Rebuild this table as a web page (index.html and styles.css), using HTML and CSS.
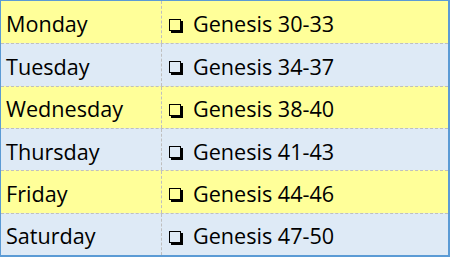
FILE: index.html
```html
<!DOCTYPE html>
<html>
<head>
<meta charset="utf-8">
<link rel="stylesheet" href="styles.css">
</head>
<body>
<div class="schedule">
  <div class="row yellow"><div class="day">Monday</div><div class="reading"><span class="box"></span>Genesis 30-33</div></div>
  <div class="row blue"><div class="day">Tuesday</div><div class="reading"><span class="box"></span>Genesis 34-37</div></div>
  <div class="row yellow"><div class="day">Wednesday</div><div class="reading"><span class="box"></span>Genesis 38-40</div></div>
  <div class="row blue"><div class="day">Thursday</div><div class="reading"><span class="box"></span>Genesis 41-43</div></div>
  <div class="row yellow"><div class="day">Friday</div><div class="reading"><span class="box"></span>Genesis 44-46</div></div>
  <div class="row blue"><div class="day">Saturday</div><div class="reading"><span class="box"></span>Genesis 47-50</div></div>
</div>
</body>
</html>
```
FILE: styles.css
```css
html, body {
  margin: 0;
  padding: 0;
  background: #ffffff;
}
.schedule {
  width: 450px;
  height: 257px;
  box-sizing: border-box;
  border-top: 1px solid #5b9bd5;
  border-left: 1px solid #5b9bd5;
  border-right: 2px solid #5b9bd5;
  border-bottom: 2px solid #5b9bd5;
  display: grid;
  grid-template-rows: repeat(6, 1fr);
  font-family: "Open Sans", sans-serif;
  font-size: 21.6px;
  color: #000;
}
.row {
  display: grid;
  grid-template-columns: 161px 1fr;
  border-top: 1px dashed #bfbfbf;
}
.row:first-child {
  border-top: none;
}
.yellow { background: #ffff99; }
.blue { background: #deeaf6; }
.day {
  padding-left: 5px;
  padding-top: 3px;
  display: flex;
  align-items: center;
  border-right: 1px dashed #bfbfbf;
}
.reading {
  padding-left: 7px;
  padding-top: 3px;
  display: flex;
  align-items: center;
}
.box {
  width: 10px;
  height: 10px;
  border: 1.5px solid #000;
  box-shadow: 2px 2px 0 #000;
  margin-right: 12px;
  margin-top: 2px;
  flex: none;
}
```
